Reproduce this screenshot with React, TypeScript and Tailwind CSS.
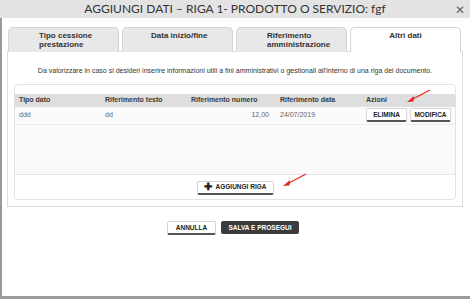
import React from 'react';

const tabs = [
    { label: 'Tipo cessione prestazione', active: false },
    { label: 'Data inizio/fine', active: false },
    { label: 'Riferimento amministrazione', active: false },
    { label: 'Altri dati', active: true },
];

const SmallBtn = ({ children, className = '' }: any) => (
    <button
        className={
            'h-[14px] rounded-[2px] border border-[#d6d6d6] border-b-2 border-b-[#555] bg-white text-[6.5px] font-bold text-[#222] flex items-center justify-center ' +
            className
        }
    >
        {children}
    </button>
);

const Arrow = ({ className = '' }: any) => (
    <svg width="26" height="14" viewBox="0 0 26 14" className={'absolute ' + className}>
        <line x1="25" y1="1" x2="6" y2="11" stroke="#e8261c" strokeWidth="1.2" />
        <path d="M2 13 L9 7 L8.5 12.5 Z" fill="#e8261c" />
    </svg>
);

export default function App() {
    return (
        <div
            className="w-[470px] h-[299px] bg-white relative overflow-hidden antialiased"
            style={{ fontFamily: '"Liberation Sans", Arial, sans-serif' }}
        >
            <div className="absolute inset-0 border-l-2 border-b-[3px] border-[#9a9a9a] pointer-events-none" />
            <div className="h-[18px] bg-[#e3e3e3] flex items-center justify-center relative">
                <span className="text-[12px] text-[#333]" style={{ fontFamily: 'Lato, sans-serif' }}>
                    AGGIUNGI DATI – RIGA 1- PRODOTTO O SERVIZIO: fgf
                </span>
                <span
                    className="absolute right-[5px] top-[1px] text-[12px] text-[#666] font-light"
                    style={{ fontFamily: 'Lato, sans-serif' }}
                >
                    ✕
                </span>
            </div>

            <div className="px-[7px] pt-[9px]">
                <div className="flex gap-[3px] pl-[1px]">
                    {tabs.map((t) => (
                        <div
                            key={t.label}
                            className={
                                'w-[111px] h-[25px] rounded-t-[5px] border border-b-0 border-[#d4d4d4] pt-[3px] text-[8px] font-bold leading-[9px] text-[#333] ' +
                                (t.active ? 'bg-white text-center text-[8.5px] relative z-10' : 'bg-[#e8e8e8] pl-[30px]')
                            }
                        >
                            {t.label === 'Data inizio/fine' ? (
                                <div className="-ml-[2px]">{t.label}</div>
                            ) : t.label === 'Riferimento amministrazione' ? (
                                <div className="w-[80px]">{t.label}</div>
                            ) : t.active ? (
                                <div>{t.label}</div>
                            ) : (
                                <div className="w-[70px]">{t.label}</div>
                            )}
                        </div>
                    ))}
                </div>
                <div className="-mt-[1px] w-[456px] h-[156px] border border-[#dcdcdc] px-[6px] pt-[14px]">
                    <div className="text-center text-[7px] text-[#333]">
                        Da valorizzare in caso si desideri inserire informazioni utili a fini amministrativi o gestionali all'interno di una riga del documento.
                    </div>
                    <div className="mt-[7px] h-[116px] rounded-[4px] border border-[#e2e2e2] flex flex-col">
                        <div className="h-[9px]" />
                        <div className="h-[13px] bg-[#dedede] grid grid-cols-[86px_86px_89px_86px_1fr] items-center text-[7px] font-bold text-[#3a3a3a] pl-[4px]">
                            <div>Tipo dato</div>
                            <div>Riferimento testo</div>
                            <div>Riferimento numero</div>
                            <div>Riferimento data</div>
                            <div>Azioni</div>
                        </div>
                        <div className="bg-[#fafafa] flex-1 flex flex-col">
                            <div className="h-[18px] grid grid-cols-[86px_86px_78px_11px_86px_1fr] items-center text-[7px] text-[#666666] pl-[4px] border-b border-[#eeeeee]">
                                <div>ddd</div>
                                <div>dd</div>
                                <div className="text-right">12,00</div>
                                <div />
                                <div>24/07/2019</div>
                                <div className="flex gap-[3px]">
                                    <SmallBtn className="w-[41px]">ELIMINA</SmallBtn>
                                    <SmallBtn className="w-[41px]">MODIFICA</SmallBtn>
                                </div>
                            </div>
                            <div className="flex-1 border-b border-[#e6e6e6]" />
                        </div>
                        <div className="h-[24px] bg-white rounded-b-[4px] flex justify-center pt-[6px]">
                            <SmallBtn className="w-[77px] gap-[4px]">
                                <span className="text-[10px] leading-none -mt-[1px]">✚</span>
                                AGGIUNGI RIGA
                            </SmallBtn>
                        </div>
                    </div>
                </div>
            </div>

            <div className="mt-[14px] flex justify-center gap-[5px] pr-[4px]">
                <SmallBtn className="w-[49px] h-[13px]">ANNULLA</SmallBtn>
                <button className="w-[78px] h-[13px] rounded-[2px] bg-[#3b3b3b] text-white text-[6.5px] font-bold flex items-center justify-center">
                    SALVA E PROSEGUI
                </button>
            </div>

            <Arrow className="left-[405px] top-[89px]" />
            <Arrow className="left-[281px] top-[173px]" />
        </div>
    );
}
